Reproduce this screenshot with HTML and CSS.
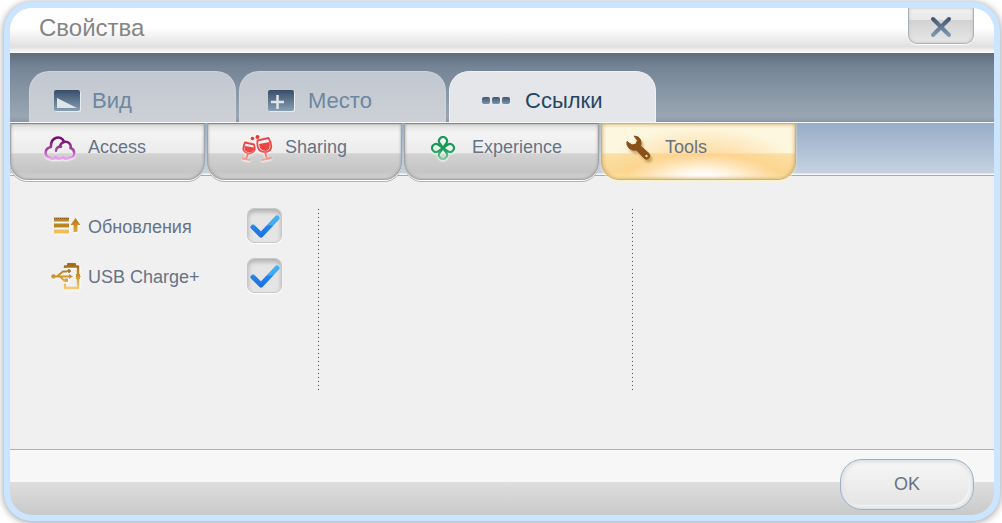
FILE: index.html
```html
<!DOCTYPE html>
<html lang="ru">
<head>
<meta charset="utf-8">
<title>Свойства</title>
<link rel="stylesheet" href="styles.css">
</head>
<body>
<main class="dialog">
  <header class="titlebar">
    <h1 class="title">Свойства</h1>
    <button class="close" type="button" aria-label="Закрыть">
      <svg width="22" height="22" viewBox="0 0 22 22"><defs><linearGradient id="slate" x1="0" y1="0" x2="0" y2="22" gradientUnits="userSpaceOnUse"><stop stop-color="#384e68"/><stop offset="1" stop-color="#8ba3b9"/></linearGradient></defs><path d="M3 3 19 19M19 3 3 19" fill="none" stroke="url(#slate)" stroke-width="4" stroke-linecap="round"/></svg>
    </button>
  </header>
  <nav class="tabs">
    <button class="tab" type="button">
      <svg class="tab-icon" width="28" height="22" viewBox="0 0 28 22"><rect x="0" y="0" width="26" height="21" rx="2" fill="url(#slate)"/><path d="M3 8V18H23Z" fill="#dfe4e9"/></svg>
      <span>Вид</span>
    </button>
    <button class="tab place" type="button">
      <svg class="tab-icon" width="28" height="22" viewBox="0 0 28 22"><rect x="0" y="0" width="26" height="21" rx="2" fill="url(#slate)"/><path d="M9.500 5V19M3 12H16" stroke="#dfe4e9" stroke-width="2.500" fill="none"/></svg>
      <span>Место</span>
    </button>
    <button class="tab active" type="button">
      <svg class="tab-icon wide" width="30" height="10" viewBox="0 0 30 10"><g fill="url(#dots)"><rect x="1" y="1" width="8" height="7" rx="2"/><rect x="11" y="1" width="8" height="7" rx="2"/><rect x="21" y="1" width="8" height="7" rx="2"/></g><defs><linearGradient id="dots" x2="0" y2="1"><stop stop-color="#40566d"/><stop offset="1" stop-color="#7892ab"/></linearGradient></defs></svg>
      <span>Ссылки</span>
    </button>
  </nav>
  <nav class="subtabs">
    <button class="subtab" type="button">
      <svg class="sub-icon" width="32" height="26" viewBox="0 0 32 26"><defs><linearGradient id="plum" x1="0" y1="0" x2="0" y2="26" gradientUnits="userSpaceOnUse"><stop offset=".2" stop-color="#78106f"/><stop offset=".6" stop-color="#a94da6"/><stop offset=".9" stop-color="#f0a0f0"/></linearGradient></defs><g fill="none" stroke="url(#plum)" stroke-width="2.600" stroke-linecap="round" stroke-linejoin="round"><path d="M6 22.500C0 21.500 0 13.500 7 12C6.500 1.500 17.500-.5 20 7C24.500 6 27.500 9.500 26.500 13C32 15 31 22.500 26 22.500C24 24 20.500 24 19 22.500C17 24 13 24 11.500 22.500C10 24 7.500 24 6 22.500Z"/><path d="M12 16C12 12.500 14.500 11.500 17 11.700M16 11.500C16.500 9 18 7.500 20 7"/></g></svg>
      <span>Access</span>
    </button>
    <button class="subtab" type="button">
      <svg class="sub-icon" width="32" height="26" viewBox="0 0 32 26"><defs><linearGradient id="wine" x1="0" y1="0" x2="0" y2="26" gradientUnits="userSpaceOnUse"><stop offset=".55" stop-color="#ed4444"/><stop offset="1" stop-color="#f7ad9e"/></linearGradient></defs><g stroke="url(#wine)" stroke-width="1.800" fill="none" stroke-linejoin="round" stroke-linecap="round"><path d="M4 7.500 13 9.500Q15.500 17.500 9 18.500Q-1 18 4 7.500ZM7 18.500 5 24M1.500 23.500 8.500 25M16.500 5.500 27.500 3Q34 14.500 25.500 17Q15 18 16.500 5.500ZM24 17 26 24M21 25 30 23"/></g><path d="M3.500 11 13 12.500Q13.500 16.500 9 17.500Q2.500 17 3.500 11ZM18 9 28.500 7Q30 14 25 16Q18.500 16 18 9Z" fill="#ed4444"/><circle cx="11.500" cy="3.500" r="1.800" fill="#ed3434"/><circle cx="16.500" cy="2" r="2" fill="#ed3434"/></svg>
      <span>Sharing</span>
    </button>
    <button class="subtab near" type="button">
      <svg class="sub-icon" width="26" height="26" viewBox="0 0 26 26"><defs><linearGradient id="leaf" x1="0" y1="0" x2="0" y2="26" gradientUnits="userSpaceOnUse"><stop offset=".55" stop-color="#159b57"/><stop offset="1" stop-color="#94d4ac"/></linearGradient></defs><path d="M13 13 9.800 8.500A4 4 0 1 1 16.200 8.500ZM13 13 9.800 17.500A4 4 0 1 0 16.200 17.500ZM13 13 8.500 9.800A4 4 0 1 0 8.500 16.200ZM13 13 17.500 9.800A4 4 0 1 1 17.500 16.200Z" fill="none" stroke="url(#leaf)" stroke-width="2.200" stroke-linejoin="round"/></svg>
      <span>Experience</span>
    </button>
    <button class="subtab tools" type="button">
      <svg class="sub-icon" width="26" height="26" viewBox="0 0 26 26"><path d="M8 1Q13 1 14.500 5Q15.500 8 14.500 11L23 18.500Q25 21 22.500 23.500Q20 25.500 17.500 22.500L10.500 15Q6 16 3 13Q0 10 1 6.500L6 10 10 9 11.500 5.500Z" fill="#8a5117" stroke="#8a5117" stroke-linejoin="round"/><circle cx="20.500" cy="21" r="1.200" fill="#f4d8a4"/></svg>
      <span>Tools</span>
    </button>
  </nav>
  <section class="content">
    <div class="column options">
      <label class="option">
        <svg class="option-icon" width="30" height="28" viewBox="0 0 30 28"><path d="M3 7.500H18M3 13.500H18" stroke="#bc8422" stroke-width="4"/><path d="M3 19.500H18" stroke="#efbd5c" stroke-width="4"/><path d="M3 6.500H18" stroke="#85571a" stroke-dasharray="1 1"/><path d="M24.500 6 29.500 13H26.500V20H22.500V13H19.500Z" fill="url(#gold)"/><defs><linearGradient id="gold" x1="0" y1="0" x2="0" y2="28" gradientUnits="userSpaceOnUse"><stop offset=".1" stop-color="#a46b14"/><stop offset=".5" stop-color="#cd922c"/><stop offset="1" stop-color="#ffd071"/></linearGradient></defs></svg>
        <span class="option-text">Обновления</span>
        <span class="check"><input type="checkbox" checked><svg width="35" height="35" viewBox="0 0 35 35"><defs><linearGradient id="tick" x1="0" y1="7" x2="0" y2="29" gradientUnits="userSpaceOnUse"><stop stop-color="#41b2f7"/><stop offset=".45" stop-color="#3fa9f4"/><stop offset=".5" stop-color="#2682e9"/><stop offset="1" stop-color="#1b72df"/></linearGradient></defs><path d="M6 19 14 27 30 10" fill="none" stroke="url(#tick)" stroke-width="5" stroke-linecap="round" stroke-linejoin="round"/></svg></span>
      </label>
      <label class="option">
        <svg class="option-icon" width="30" height="28" viewBox="0 0 30 28"><g fill="none" stroke="url(#gold)"><path d="M2 14.500H20M6 14.500 12 9.500H16M9 14.500 13 18.500H15" stroke-width="1.800"/><path d="M14 6V4.500H27V12M27 17V26H14V22" stroke-width="2.400" stroke-linejoin="round"/></g><g fill="url(#gold)"><rect x="16" y="1" width="9" height="4" rx="1"/><circle cx="2.500" cy="14.500" r="2.200"/><path d="M18 12 22 14.500 18 17ZM13.500 16.500H17V20H13.500ZM25 12H29V14L30 14.500 29 15.500V17H25Z"/><path d="M18 7V11M16 9H20" stroke="#a46b14" stroke-width="1.500"/></g></svg>
        <span class="option-text">USB Charge+</span>
        <span class="check"><input type="checkbox" checked><svg width="35" height="35" viewBox="0 0 35 35"><path d="M6 19 14 27 30 10" fill="none" stroke="url(#tick)" stroke-width="5" stroke-linecap="round" stroke-linejoin="round"/></svg></span>
      </label>
    </div>
    <div class="column divided"></div>
    <div class="column divided"></div>
  </section>
  <footer class="footer"><button class="ok" type="button">OK</button></footer>
</main>
</body>
</html>
```

FILE: styles.css
```css
* { box-sizing: border-box; }

body {
  margin: 0;
  min-height: 100vh;
  padding: 2px 2px 2px 4px;
  display: flex;
  background: #fff;
  font-family: "Liberation Sans", Arial, sans-serif;
  color: #667384;
}

button {
  margin: 0;
  padding: 0;
  border: 0;
  font: inherit;
  color: inherit;
  cursor: pointer;
}

.dialog {
  flex: 1;
  display: flex;
  flex-direction: column;
  overflow: hidden;
  border: 6px solid #cae5ff;
  border-radius: 28px;
  background: #f0f0f0;
  box-shadow: 0 1px 7px 1px #aaa;
}

.titlebar {
  display: flex;
  justify-content: space-between;
  align-items: flex-start;
  height: 45px;
  padding: 0 20px 0 29px;
  background: linear-gradient(#fff 45%, #e0e0e0 86%, #eee 93%, #fdfdf8);
}

.title {
  margin: 0;
  font-size: 24px;
  line-height: 40px;
  font-weight: normal;
  color: #858585;
}

.close {
  display: grid;
  place-items: center;
  width: 66px;
  height: 36px;
  padding-top: 3px;
  border: 1px solid #aab1b9;
  border-top: 0;
  border-radius: 0 0 9px 9px;
  background: linear-gradient(#f1f1f1, #e8e8e8 33%, #d2d2d2 34%, #e7e7e7);
  box-shadow: inset 0 0 3px #bbb, 0 1px 1px #fff;
}

.tabs {
  display: flex;
  align-items: flex-end;
  gap: 3px;
  height: 70px;
  padding-left: 19px;
  border-bottom: 1px solid #f8f8f8;
  background: linear-gradient(#5e6d7e, #748496 20%, #9aa6b2 92%, #8b97a8);
}

.tab {
  display: flex;
  align-items: center;
  width: 207px;
  height: 51px;
  padding: 8px 0 0 24px;
  border: solid #cdd4dd;
  border-width: 1px 1px 0;
  border-radius: 20px 20px 0 0;
  background: linear-gradient(#c1c8d1, #cdd0d6);
  font-size: 22px;
  color: #6d87a0;
}

.tab.place { padding-left: 28px; }

.tab.active {
  padding-left: 31px;
  border-color: #f0f2f4;
  background: #e4e6e9;
  color: #234564;
}

.tab-icon {
  margin-right: 10px;
  filter: drop-shadow(1px 1px 0 #e9ecef);
}

.place .tab-icon { margin-right: 12px; }

.tab-icon.wide { margin-right: 14px; }

.subtabs {
  display: flex;
  gap: 2px;
  height: 53px;
  border-bottom: 1px solid #9eabbd;
  background: linear-gradient(#97adc7, #c5d2e2 96%, #f5f7fa 98%);
}

.subtab {
  display: flex;
  align-items: center;
  width: 195px;
  height: 57px;
  padding: 0 0 8px 33px;
  border: 1px solid #a4a4a4;
  border-top-color: #7c8798;
  border-radius: 0 0 18px 18px;
  background: linear-gradient(#dedede, #f4f4f4 16%, #ebebeb 53%, #d2d2d2 54%, #c5c5c5 87%, #d3d3d3);
  box-shadow: inset 0 0 3px #999, 0 1px 0 #fff, 0 2px 0 #b1b1b1;
  font-size: 18px;
  color: #667384;
}

.subtab.near { padding-left: 25px; }

.subtab.tools {
  padding-left: 24px;
  border-color: #c9b27f;
  background:
    radial-gradient(ellipse 40% 45% at 52% 100%, #fff 0 15%, #fffaf0cc 45%, #fff0 100%),
    radial-gradient(ellipse 50% 80% at 52% 85%, #ffcc80aa 0 35%, #ffcc8000 100%),
    linear-gradient(#fdf7df, #fdf7df 53%, #fae0a8 54%, #fbd893 88%, #fff0b5);
  box-shadow: inset 0 0 4px #c69b53, 0 1px 2px #fff3c0;
}

.sub-icon {
  margin-right: 12px;
  filter: drop-shadow(0 1px 1px #fff);
}

.near .sub-icon { margin-right: 16px; }

.tools .sub-icon {
  margin-right: 13px;
  filter: drop-shadow(2px 3px 1px #a37d4799);
}

.content {
  flex: 1;
  display: grid;
  grid-template-columns: 308fr 314fr 362fr;
  padding: 32px 0 57px;
}

.options {
  display: flex;
  flex-direction: column;
  gap: 15px;
  padding: 0 36px 0 41px;
}

.option {
  display: flex;
  align-items: center;
  font-size: 18px;
}

.option-icon {
  flex: none;
  margin-right: 7px;
  filter: drop-shadow(1px 1px 1px #fff);
}

.option-text {
  flex: 1;
  padding-top: 4px;
  white-space: nowrap;
}

.check {
  display: grid;
  width: 35px;
  height: 35px;
}

.check > * { grid-area: 1 / 1; }

.check input {
  appearance: none;
  width: 35px;
  height: 35px;
  margin: 0;
  border: 1px solid #c8c8c8;
  border-radius: 7px;
  background: #e5e5e5;
  box-shadow: inset 0 3px 4px #b0b0b0, 0 1px 1px #fff;
}

.check svg {
  z-index: 1;
  pointer-events: none;
}

.check input:not(:checked) + svg { visibility: hidden; }

.divided {
  background: repeating-linear-gradient(transparent 0 1px, #4c4c4c 1px 2px, transparent 2px 4px) left / 1px 100% no-repeat;
}

.footer {
  display: flex;
  justify-content: flex-end;
  align-items: center;
  height: 66px;
  padding: 3px 20px 0;
  border-top: 1px solid #b2b2b2;
  background: linear-gradient(#f7f7f7 49%, #dedede 50%, #c9c9c9);
}

.ok {
  width: 134px;
  height: 51px;
  border: 1px solid #9eb0c4;
  border-radius: 22px;
  background: linear-gradient(#f7f7f7, #e3e3e3);
  box-shadow: inset 0 0 0 1px #d9e3ef, inset 0 0 3px 3px #e5e5e5, inset -2px -2px 1px 2px #fafafa;
  font-size: 18px;
}
```
